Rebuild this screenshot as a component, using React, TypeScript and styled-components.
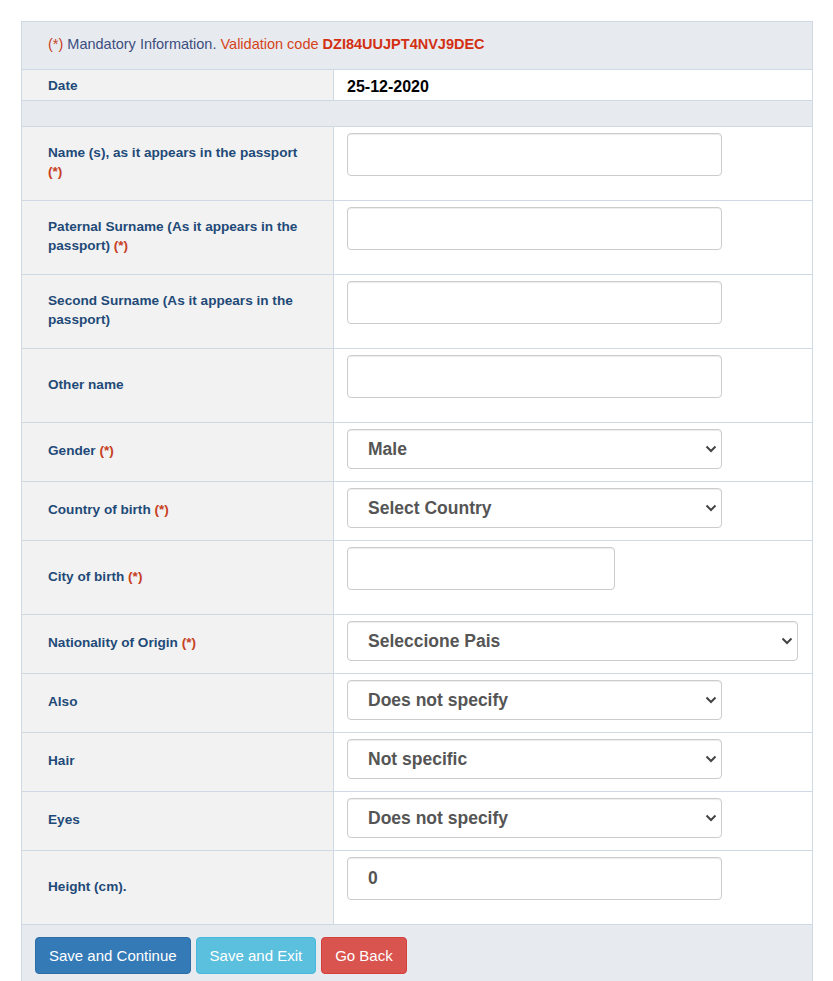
import styled, { createGlobalStyle } from 'styled-components';

const GlobalStyle = createGlobalStyle`
  body {
    margin: 0;
    background: #fff;
    font-family: "Liberation Sans", Arial, sans-serif;
  }
`;

type Field = {
  label: string;
  required?: boolean;
  kind: 'text' | 'select';
  value?: string;
  width?: 'normal' | 'short' | 'wide';
  tall?: boolean;
};

const fields: Field[] = [
  { label: 'Name (s), as it appears in the passport', required: true, kind: 'text', tall: true },
  { label: 'Paternal Surname (As it appears in the passport)', required: true, kind: 'text', tall: true },
  { label: 'Second Surname (As it appears in the passport)', kind: 'text', tall: true },
  { label: 'Other name', kind: 'text', tall: true },
  { label: 'Gender', required: true, kind: 'select', value: 'Male' },
  { label: 'Country of birth', required: true, kind: 'select', value: 'Select Country' },
  { label: 'City of birth', required: true, kind: 'text', width: 'short', tall: true },
  { label: 'Nationality of Origin', required: true, kind: 'select', value: 'Seleccione Pais', width: 'wide' },
  { label: 'Also', kind: 'select', value: 'Does not specify' },
  { label: 'Hair', kind: 'select', value: 'Not specific' },
  { label: 'Eyes', kind: 'select', value: 'Does not specify' },
  { label: 'Height (cm).', kind: 'text', value: '0', tall: true },
];

const Chevron = () => (
  <svg width="12" height="8" viewBox="0 0 12 8">
    <path d="M1.5 1.5 L6 6 L10.5 1.5" fill="none" stroke="#444" strokeWidth="2" />
  </svg>
);

export default function App() {
  return (
    <>
      <GlobalStyle />
      <Page>
        <Form>
          <Notice>
            <Req>(*)</Req> Mandatory Information. <Code>Validation code</Code>{' '}
            <CodeValue>DZI84UUJPT4NVJ9DEC</CodeValue>
          </Notice>
          <Row>
            <Label $compact>Date</Label>
            <DateValue>25-12-2020</DateValue>
          </Row>
          <Spacer />
          {fields.map((f) => (
            <Row key={f.label}>
              <Label>
                <span>
                  {f.label}
                  {f.required && (
                    <>
                      {' '}
                      <Req>(*)</Req>
                    </>
                  )}
                </span>
              </Label>
              <Cell $tall={f.tall}>
                {f.kind === 'text' ? (
                  <TextInput $width={f.width ?? 'normal'} defaultValue={f.value ?? ''} />
                ) : (
                  <SelectWrap $width={f.width ?? 'normal'}>
                    <Select defaultValue={f.value}>
                      <option>{f.value}</option>
                    </Select>
                    <Arrow>
                      <Chevron />
                    </Arrow>
                  </SelectWrap>
                )}
              </Cell>
            </Row>
          ))}
          <Actions>
            <Button $variant="primary">Save and Continue</Button>
            <Button $variant="info">Save and Exit</Button>
            <Button $variant="danger">Go Back</Button>
          </Actions>
        </Form>
      </Page>
    </>
  );
}

const Page = styled.div`
  padding: 21px 0 0 21px;
`;

const Form = styled.div`
  width: 792px;
  border: 1px solid #cfd9e4;
  border-bottom: none;
  box-sizing: border-box;
`;

const Notice = styled.div`
  height: 48px;
  box-sizing: border-box;
  padding: 14px 0 0 26px;
  background: #e7ebef;
  font-size: 14.5px;
  color: #3d4d80;
  border-bottom: 1px solid #cfd9e4;
`;

const Req = styled.span`
  color: #c7401e;
`;

const Code = styled.span`
  color: #d6431b;
`;

const CodeValue = styled.span`
  color: #d32f12;
  font-weight: bold;
`;

const Row = styled.div`
  display: grid;
  grid-template-columns: 312px 1fr;
  border-bottom: 1px solid #cfd9e4;
`;

const Label = styled.div<{ $compact?: boolean }>`
  background: #f2f2f2;
  border-right: 1px solid #cfd9e4;
  display: flex;
  align-items: center;
  padding: ${(p) => (p.$compact ? '0 14px 0 26px' : '0 26px 3px 26px')};
  font-size: 13.6px;
  font-weight: bold;
  line-height: 19px;
  color: #1f4a78;
`;

const DateValue = styled.div`
  height: 30px;
  box-sizing: border-box;
  display: flex;
  align-items: center;
  padding: 3px 0 0 13px;
  font-size: 16px;
  font-weight: bold;
  color: #000;
`;

const Spacer = styled.div`
  height: 25px;
  background: #e7ebef;
  border-bottom: 1px solid #cfd9e4;
`;

const Cell = styled.div<{ $tall?: boolean }>`
  padding: ${(p) => (p.$tall ? '6px 13px 24px' : '6px 13px 12px')};
`;

const widths = { normal: '375px', short: '268px', wide: '451px' };

const TextInput = styled.input<{ $width: 'normal' | 'short' | 'wide' }>`
  display: block;
  width: ${(p) => widths[p.$width]};
  height: 43px;
  box-sizing: border-box;
  border: 1px solid #ccc;
  border-radius: 4px;
  box-shadow: inset 0 1px 1px rgba(0, 0, 0, 0.075);
  padding: 0 20px;
  font-family: "Liberation Sans", Arial, sans-serif;
  font-size: 17.5px;
  font-weight: bold;
  color: #555;
  outline: none;
`;

const SelectWrap = styled.div<{ $width: 'normal' | 'short' | 'wide' }>`
  position: relative;
  width: ${(p) => widths[p.$width]};
`;

const Select = styled.select`
  display: block;
  width: 100%;
  height: 40px;
  box-sizing: border-box;
  appearance: none;
  background: #fff;
  border: 1px solid #ccc;
  border-radius: 4px;
  box-shadow: inset 0 1px 1px rgba(0, 0, 0, 0.075);
  padding: 0 40px 0 20px;
  font-family: "Liberation Sans", Arial, sans-serif;
  font-size: 17.5px;
  font-weight: bold;
  color: #555;
  outline: none;
`;

const Arrow = styled.span`
  position: absolute;
  right: 5px;
  top: 16px;
  display: flex;
  pointer-events: none;
`;

const Actions = styled.div`
  background: #e7ebef;
  padding: 12px 13px 10px;
  display: flex;
  gap: 5px;
`;

const palette = {
  primary: { bg: '#337ab7', border: '#2e6da4' },
  info: { bg: '#5bc0de', border: '#46b8da' },
  danger: { bg: '#d9534f', border: '#d43f3a' },
};

const Button = styled.button<{ $variant: keyof typeof palette }>`
  height: 37px;
  padding: 0 13px;
  border: 1px solid ${(p) => palette[p.$variant].border};
  background: ${(p) => palette[p.$variant].bg};
  border-radius: 4px;
  color: #fff;
  font-family: "Liberation Sans", Arial, sans-serif;
  font-size: 15px;
  cursor: pointer;
`;
